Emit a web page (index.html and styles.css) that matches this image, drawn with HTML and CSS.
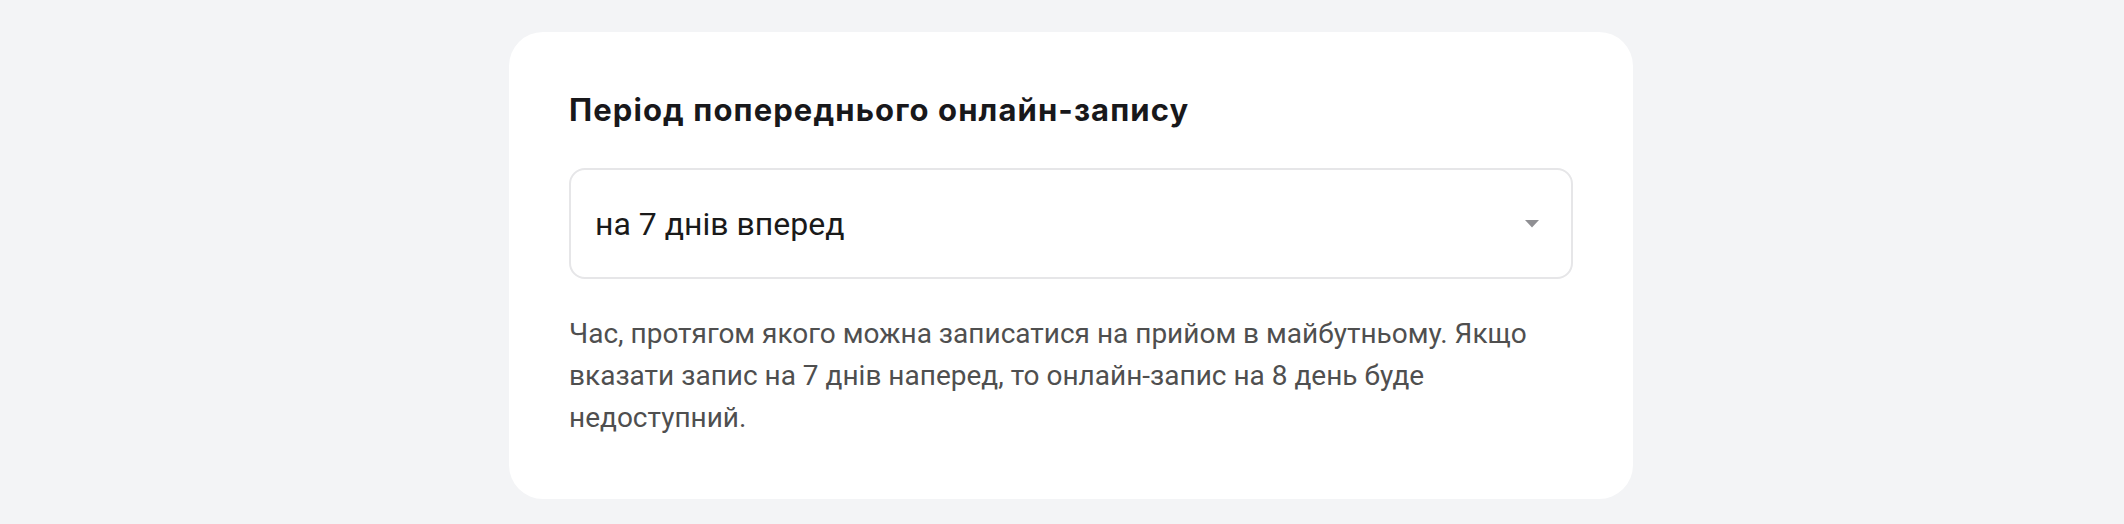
FILE: index.html
```html
<!DOCTYPE html>
<html>

<head>
  <title>Період попереднього онлайн-запису</title>
  <link rel="stylesheet" href="styles.css">
</head>

<body>
  <div class="page">
    <div class="card">
      <h2 class="card-title">Період попереднього онлайн-запису</h2>
      <div class="select">
        <span class="select-value">на 7 днів вперед</span>
        <svg class="select-arrow" width="14" height="8" viewBox="0 0 14 8">
          <path d="M0 0 H14 L7 7.5 Z" fill="#8f8f93"/>
        </svg>
      </div>
      <p class="hint">Час, протягом якого можна записатися на прийом в майбутньому. Якщо вказати запис на 7 днів наперед, то онлайн-запис на 8 день буде недоступний.</p>
    </div>
  </div>
</body>

</html>
```

FILE: styles.css
```css
body {
  margin: 0;
  background: #f3f4f6;
  font-family: Roboto, "Liberation Sans", sans-serif;
}

.page {
  padding: 32px 0 0 509px;
}

.card {
  box-sizing: border-box;
  width: 1124px;
  background: #fff;
  border-radius: 34px;
  padding: 60px;
}

.card-title {
  margin: 0 0 40px;
  font-family: Inter, "Noto Sans", sans-serif;
  font-size: 31px;
  font-weight: 700;
  line-height: 36px;
  letter-spacing: 1.1px;
  color: #18181b;
}

.select {
  display: flex;
  align-items: center;
  justify-content: space-between;
  height: 111px;
  box-sizing: border-box;
  border: 2px solid #e6e6e8;
  border-radius: 16px;
  padding: 0 32px 0 24px;
}

.select-value {
  font-size: 32px;
  color: #1a1a1a;
}

.select-arrow {
  display: block;
}

.hint {
  margin: 34px 0 0;
  font-size: 28px;
  line-height: 42px;
  color: #4f4f4f;
}
```
